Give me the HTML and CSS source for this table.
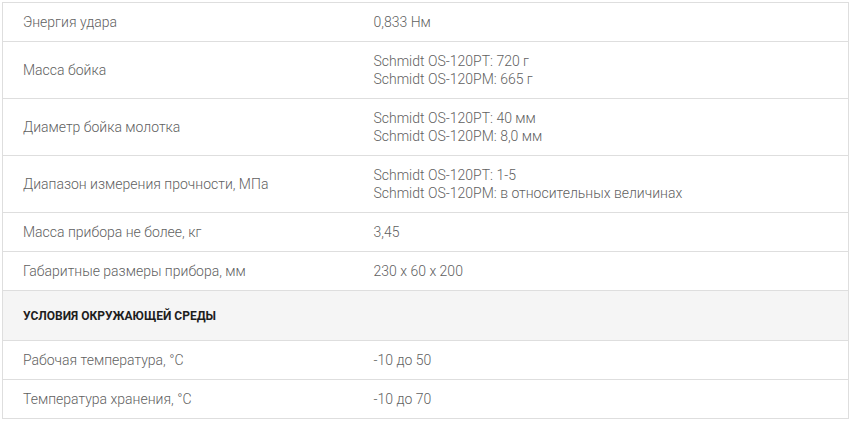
FILE: index.html
```html
<!DOCTYPE html>
<html lang="ru">
<head>
<meta charset="utf-8">
<link rel="stylesheet" href="styles.css">
</head>
<body>
<div class="wrap">
<table class="specs">
<colgroup><col class="c1"><col class="c2"></colgroup>
<tbody>
<tr><td>Энергия удара</td><td>0,833 Нм</td></tr>
<tr><td>Масса бойка</td><td>Schmidt OS-120PT: 720 г<br>Schmidt OS-120PM: 665 г</td></tr>
<tr><td>Диаметр бойка молотка</td><td>Schmidt OS-120PT: 40 мм<br>Schmidt OS-120PM: 8,0 мм</td></tr>
<tr><td>Диапазон измерения прочности, МПа</td><td>Schmidt OS-120PT: 1-5<br>Schmidt OS-120PM: в относительных величинах</td></tr>
<tr><td>Масса прибора не более, кг</td><td>3,45</td></tr>
<tr><td>Габаритные размеры прибора, мм</td><td>230 x 60 x 200</td></tr>
<tr class="head"><td colspan="2">Условия окружающей среды</td></tr>
<tr><td>Рабочая температура, °С</td><td>-10 до 50</td></tr>
<tr><td>Температура хранения, °С</td><td>-10 до 70</td></tr>
</tbody>
</table>
</div>
</body>
</html>
```
FILE: styles.css
```css
html, body {
  margin: 0;
  padding: 0;
  background: #fff;
}
.wrap {
  padding: 2px;
}
.specs {
  width: 847px;
  border-collapse: collapse;
  table-layout: fixed;
  font-family: Roboto, "Liberation Sans", sans-serif;
  font-size: 14px;
  font-weight: 300;
  line-height: 18px;
  color: #5f5f5f;
}
.c1 { width: 351px; }
.specs td {
  border: 1px solid #dedede;
  border-left: none;
  border-right: none;
  padding: 10px 20px;
  vertical-align: middle;
}
.specs td:first-child { border-left: 1px solid #dedede; }
.specs td:last-child { border-right: 1px solid #dedede; }
.specs .head td {
  background: #f5f5f5;
  color: #1e1e1e;
  font-weight: 700;
  font-size: 12px;
  text-transform: uppercase;
  padding: 16px 20px 15px;
}
```
